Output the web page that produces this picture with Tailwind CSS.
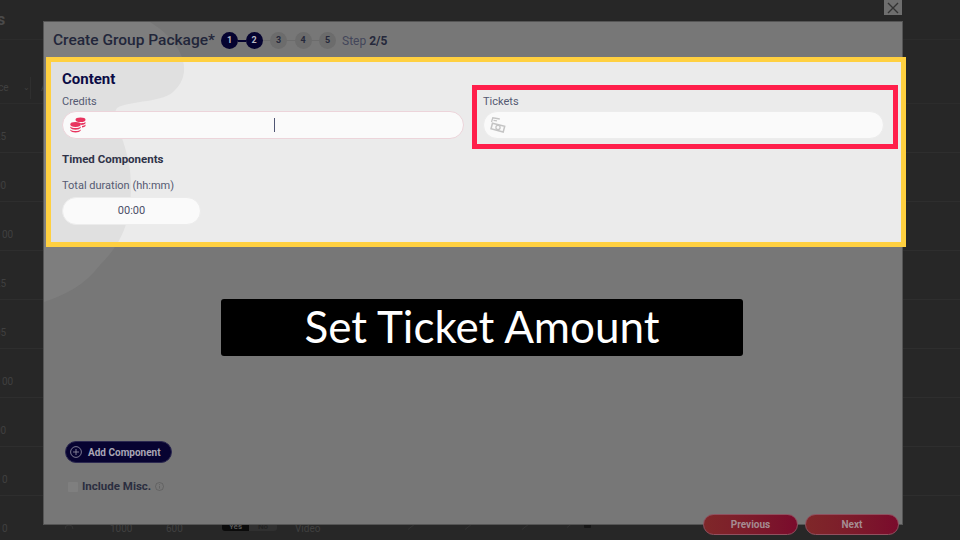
<!DOCTYPE html>
<html lang="en">
<head>
    <meta charset="UTF-8">
    <title>Create Group Package</title>
    <script src="https://cdn.jsdelivr.net/npm/@tailwindcss/browser@4"></script>
</head>
<body class="bg-[#272727]">
<div class="relative w-[960px] h-[540px] overflow-hidden bg-[#272727] font-['Roboto',sans-serif]">

    <!-- Dimmed table behind the modal -->
    <div class="flex flex-col text-[10px] text-[#404040]">
        <div class="h-[40px] border-b border-[#2c2c2c] text-[16px] font-bold text-[#4a4a4a] leading-[40px] -ml-[3px]">s</div>
        <div class="h-[64px] border-b border-[#2c2c2c] flex items-center pt-[32px] -ml-[14px]">
            <span class="w-[37px]">Price</span>
            <span class="w-[5px] text-[8px]">⌄</span>
            <span class="ml-[2px] border-l border-[#2f2f2f] pl-[10px] h-[22px] leading-[22px]">A</span>
        </div>
        <div class="h-[49px] border-b border-[#2e2e2e] pt-[25px] -ml-[5px]">25</div>
        <div class="h-[49px] border-b border-[#2e2e2e] pt-[25px] -ml-[5px]">00</div>
        <div class="h-[49px] border-b border-[#2e2e2e] pt-[25px] pl-[2px]">00</div>
        <div class="h-[49px] border-b border-[#2e2e2e] pt-[25px] -ml-[5px]">25</div>
        <div class="h-[49px] border-b border-[#2e2e2e] pt-[25px] -ml-[5px]">05</div>
        <div class="h-[49px] border-b border-[#2e2e2e] pt-[25px] pl-[2px]">00</div>
        <div class="h-[49px] border-b border-[#2e2e2e] pt-[25px] -ml-[5px]">00</div>
        <div class="h-[49px] border-b border-[#2e2e2e] pt-[25px] pl-[2px]">0</div>
        <div class="h-[49px] flex items-start pt-[25px] pl-[2px]">
            <span class="w-[63px]">0</span>
            <svg class="w-[45px] mt-[1px]" width="10" height="8" viewBox="0 0 45 8" fill="none" stroke="#333333"><path d="M0 7a4 4 0 0 1 8 0"/></svg>
            <span class="w-[56px]">1000</span>
            <span class="w-[56px]">600</span>
            <span class="flex w-[55px] h-[8px] mt-[2px] text-[8px] font-bold leading-[8px] text-center">
                <span class="w-[27px] bg-[#0b0b0b] rounded-l-[3px] text-[#555555]">Yes</span>
                <span class="w-[28px] bg-[#303030] rounded-r-[3px] text-[#222222]">No</span>
            </span>
            <span class="ml-[18px]">Video</span>
            <span class="ml-[87px] flex items-center mt-[2px] gap-[48px]">
                <svg width="9" height="7" viewBox="0 0 9 7" stroke="#333333"><path d="M1 6.500L8 1"/></svg>
                <svg width="9" height="7" viewBox="0 0 9 7" stroke="#333333"><path d="M1 6.500L8 1"/></svg>
                <svg width="9" height="7" viewBox="0 0 9 7" stroke="#333333"><path d="M1 6.500L8 1"/></svg>
            </span>
            <span class="ml-[36px] flex items-center gap-[9px] mt-[-1px]">
                <svg width="9" height="7" viewBox="0 0 9 7" stroke="#333333"><path d="M1 6.500L8 1"/></svg>
                <span class="w-[7px] h-[8px] bg-[#161616] rounded-[1px]"></span>
            </span>
        </div>
    </div>

    <!-- Close button -->
    <button class="absolute left-[884px] top-0 w-[18px] h-[15px] bg-[#6e6e6e] flex items-center justify-center">
        <svg width="12" height="12" viewBox="0 0 12 12" fill="none" stroke="#333333" stroke-width="1.4"><path d="M1 1l10 10M11 1L1 11"/></svg>
    </button>

    <!-- Modal -->
    <div class="absolute left-[44px] top-[22px] w-[858px] h-[502px] bg-[#777777] shadow-[0_0_0_1px_#555555] overflow-hidden">
        <svg class="absolute left-0 top-0" width="858" height="502" viewBox="44 22 858 502">
            <path fill="#7e7e7e" d="M44 22H150C180 40 195 70 175 90C165 103 130 100 117 108C110 118 125 135 130 170C134 215 125 240 100 265C85 285 65 295 44 302Z"/>
        </svg>
        <div class="relative flex items-center h-[36px] pt-[1px] pl-[9px] text-[#22263a]">
            <h1 class="text-[15.500px] font-medium w-[168px] whitespace-nowrap">Create Group Package*</h1>
            <div class="flex items-center text-[9px] font-bold">
                <span class="w-[17px] h-[17px] rounded-full bg-[#050330] text-[#b9b9c4] flex items-center justify-center">1</span>
                <span class="w-[7.500px] h-[2px] bg-[#050330]"></span>
                <span class="w-[17px] h-[17px] rounded-full bg-[#050330] text-[#b9b9c4] flex items-center justify-center">2</span>
                <span class="w-[7.500px] h-[1px] bg-[#6c6c6c]"></span>
                <span class="w-[17px] h-[17px] rounded-full bg-[#6c6c6c] text-[#25283b] flex items-center justify-center">3</span>
                <span class="w-[7.500px] h-[1px] bg-[#6c6c6c]"></span>
                <span class="w-[17px] h-[17px] rounded-full bg-[#6c6c6c] text-[#25283b] flex items-center justify-center">4</span>
                <span class="w-[7.500px] h-[1px] bg-[#6c6c6c]"></span>
                <span class="w-[17px] h-[17px] rounded-full bg-[#6c6c6c] text-[#25283b] flex items-center justify-center">5</span>
            </div>
            <span class="ml-[6px] text-[12px] text-[#43465a]">Step <b class="font-bold text-[#25283b]">2/5</b></span>
        </div>

        <!-- Modal footer content -->
        <div class="absolute left-[21px] top-[419px] flex flex-col items-start">
            <button class="h-[22px] w-[107px] rounded-full bg-[#070331] border border-[#2b2850] flex items-center pl-[4px] gap-[6px] text-[10px] font-bold text-[#a9a6b5] whitespace-nowrap">
                <svg width="12" height="12" viewBox="0 0 12 12" fill="none" stroke="#9a98aa" stroke-width="0.8"><circle cx="6" cy="6" r="5.400"/><path d="M6 3v6M3 6h6"/></svg>
                Add Component
            </button>
            <label class="flex items-center mt-[15px] ml-[3px] text-[11.500px] font-bold text-[#2b2e40] whitespace-nowrap">
                <span class="w-[10px] h-[10px] rounded-[1px] bg-[#7f7f7f] mr-[4px]"></span>
                Include Misc.
                <svg class="ml-[4px] -mt-[1px]" width="9" height="9" viewBox="0 0 9 9" fill="none" stroke="#5a5a5a" stroke-width="0.7"><circle cx="4.500" cy="4.500" r="4"/><path d="M4.500 4v2.600M4.500 2.200v.9"/></svg>
            </label>
        </div>
    </div>

    <!-- Yellow highlight -->
    <div class="absolute left-[46px] top-[57px] w-[860px] h-[190px] border-[5px] border-[#ffd040] bg-[#ebebeb]">
        <svg class="absolute left-0 top-0" width="850" height="180" viewBox="51 62 850 180">
            <path fill="#e0e0e0" d="M44 22H150C180 40 195 70 175 90C165 103 130 100 117 108C110 118 125 135 130 170C134 215 125 240 100 265C85 285 65 295 44 302Z"/>
        </svg>
        <div class="relative pl-[11px] pt-[8px]">
            <h2 class="text-[15px] font-bold text-[#0b0b45] leading-[18px]">Content</h2>
            <div class="grid grid-cols-[402px_401px] gap-x-[19px] mt-[6px]">
                <div>
                    <label class="block text-[11px] leading-[16px] text-[#555a72]">Credits</label>
                    <div class="mt-[1px] h-[28px] rounded-full bg-[#fafafa] border border-[#ecd4da] flex items-center pl-[7px] relative">
                        <svg width="16" height="16" viewBox="0 0 16 16" fill="#e8345f">
                            <ellipse cx="10.500" cy="2.800" rx="5" ry="2.300"/>
                            <path d="M9 6c2.500.4 5.300.1 6.500-1v1.300c-.6 1-2.300 1.600-4 1.600z"/>
                            <path d="M12 9c1.500-.1 3-.7 3.500-1.500V9c-.6.9-2 1.400-3.500 1.500z"/>
                            <ellipse cx="5.500" cy="7.500" rx="5.200" ry="2.400"/>
                            <path d="M.3 9.500c1 1 3 1.500 5.200 1.500s4.200-.5 5.200-1.500v1.300c-.6 1.200-2.800 1.900-5.200 1.900S.9 12 .3 10.800z"/>
                            <path d="M.3 12.500c1 1 3 1.500 5.200 1.500s4.200-.5 5.200-1.500v1c-.6 1.300-2.800 2-5.200 2s-4.600-.7-5.200-2z"/>
                        </svg>
                        <span class="absolute left-[211px] top-[6px] w-[1px] h-[14px] bg-[#4f5573]"></span>
                    </div>
                </div>
                <div>
                    <label class="block text-[11px] leading-[16px] text-[#555a72]">Tickets</label>
                    <div class="mt-[1px] h-[28px] rounded-full bg-[#fafafa] border border-[#ececec] flex items-center pl-[6px]">
                        <svg width="16" height="16" viewBox="0 0 16 16" fill="none" stroke="#c4c4c4">
                            <path stroke-width="1.300" d="M1.500 5L2.800.8l7 1.200M3.500 3.300l3.500.6"/>
                            <path stroke-width="1.500" d="M2.500 6.200l12.200 3-1.500 5.800L1 11.800z"/>
                            <circle cx="8" cy="10.500" r="2.100" stroke-width="1.300"/>
                        </svg>
                    </div>
                </div>
            </div>
            <h3 class="mt-[12px] text-[11.500px] font-bold leading-[16px] text-[#2f3348]">Timed Components</h3>
            <label class="block mt-[11px] text-[11px] leading-[16px] text-[#555a72]">Total duration (hh:mm)</label>
            <div class="mt-[3px] w-[139px] h-[28px] rounded-full bg-[#fafafa] border border-[#ececec] flex items-center justify-center text-[11px] text-[#4a4e66]">00:00</div>
        </div>
        <!-- Red highlight -->
        <div class="absolute left-[421px] top-[23px] w-[426px] h-[64px] border-[5px] border-[#ff1f4b]"></div>
    </div>

    <!-- Caption -->
    <div class="absolute left-[221px] top-[299px] w-[522px] h-[57px] pb-[3px] rounded-[3px] bg-black flex items-center justify-center font-['Lato',sans-serif] text-[44px] text-white whitespace-nowrap">Set Ticket Amount</div>

    <!-- Previous / Next -->
    <div class="absolute left-[703px] top-[514px] flex gap-[7px]">
        <button class="w-[95px] h-[21px] rounded-full bg-linear-to-r from-[#7f2729] to-[#7a0a2c] border border-[#91505f] text-[10px] font-bold text-[#a58c92]">Previous</button>
        <button class="w-[94px] h-[21px] rounded-full bg-linear-to-r from-[#7f2729] to-[#7a0a2c] border border-[#91505f] text-[10px] font-bold text-[#a58c92]">Next</button>
    </div>
</div>
</body>
</html>
